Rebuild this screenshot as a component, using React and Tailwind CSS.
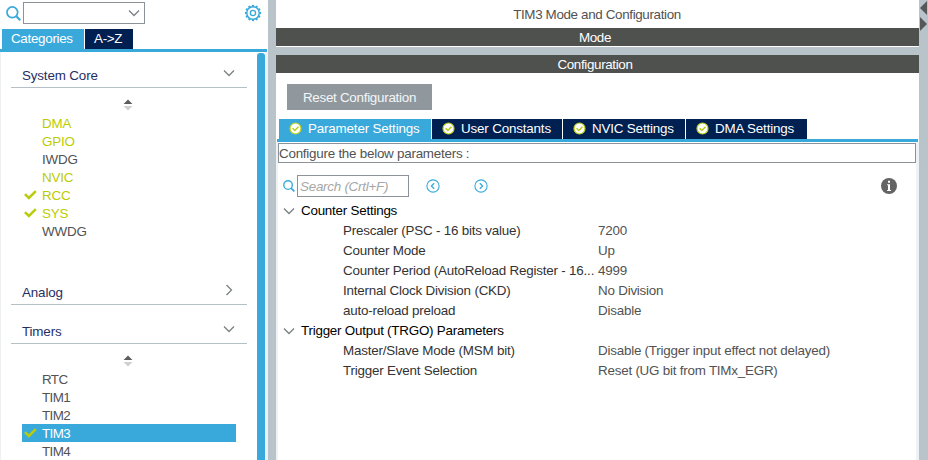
const Magnifier = ({ size }) => (
  <svg width={size} height={size} viewBox="0 0 14 14" fill="none" stroke="#39a9dc" strokeWidth="1.6" className="shrink-0">
    <circle cx="5.9" cy="5.9" r="5" />
    <path d="M9.4 9.4 13.3 13.3" strokeWidth="2" />
  </svg>
);

const Chevron = ({ right }) => (
  <svg width="12" height="12" viewBox="0 0 12 12" fill="none" stroke="#7b8084" strokeWidth="1.3" className="shrink-0">
    <path d={right ? "M3.5 1 8.5 6 3.5 11" : "M1 3.5 6 8.5 11 3.5"} />
  </svg>
);

const teeth = [0, 30, 60, 90, 120, 150, 180, 210, 240, 270, 300, 330];

const Gear = () => (
  <svg width="18" height="18" viewBox="0 0 18 18" fill="none" stroke="#39a9dc" className="shrink-0">
    <circle cx="9" cy="9" r="6.2" strokeWidth="1.4" />
    <circle cx="9" cy="9" r="2.6" strokeWidth="1.4" />
    {teeth.map((a) => (
      <path key={a} d="M9 .9v1.9" strokeWidth="2.2" transform={`rotate(${a} 9 9)`} />
    ))}
  </svg>
);

const Tick = () => (
  <svg width="13" height="10" viewBox="0 0 13 10" fill="none" stroke="#b9cc0c" strokeWidth="2.5">
    <path d="M0.9 4.2 4.9 8 11.8 1.2" />
  </svg>
);

const Badge = () => (
  <svg width="13" height="13" viewBox="0 0 13 13" className="shrink-0">
    <circle cx="6.5" cy="6.5" r="5.5" fill="#fff" stroke="#bccf1a" strokeWidth="1.2" />
    <path d="M3.6 6.3 5.8 8.5 9.5 4.8" fill="none" stroke="#b9cc0c" strokeWidth="1.4" />
  </svg>
);

const Sorter = () => (
  <svg width="10" height="12" viewBox="0 0 10 12">
    <path d="M.6 5 5 .4 9.4 5Z" fill="#5c5c5c" />
    <path d="M.6 7 5 11.6 9.4 7Z" fill="#cfcfcf" />
  </svg>
);

const CircleArrow = ({ right }) => (
  <svg width="14" height="14" viewBox="0 0 14 14" fill="none" stroke="#39a9dc" className="shrink-0">
    <circle cx="7" cy="7" r="6.1" strokeWidth="1.1" />
    <path d={right ? "M5.8 4.2 8.6 7 5.8 9.8" : "M8.2 4.2 5.4 7 8.2 9.8"} strokeWidth="1.3" />
  </svg>
);

const Info = () => (
  <svg width="16" height="16" viewBox="0 0 16 16" className="shrink-0">
    <circle cx="8" cy="8" r="8" fill="#646464" />
    <path d="M7 2.8h2v1.9H7ZM6.1 6.2H9v5.9h1v1H6.1v-1H7V7.2h-.9Z" fill="#fff" />
  </svg>
);

function GroupHeader({ label, closed }) {
  return (
    <div className="ml-[10px] flex h-[24px] w-[236px] items-center justify-between border-b border-[#b4c0c5] pr-[12px] pl-[11px] tracking-[-0.15px] text-[#1f2f66]">
      <span>{label}</span>
      <span className="-mt-[5px] flex">
        <Chevron right={closed} />
      </span>
    </div>
  );
}

const tones = { green: "text-[#bbcc01]", gray: "text-[#525252]", selected: "bg-[#39a9dc] text-white" };

function PeripheralList({ items, spacing }) {
  return (
    <ul className={`ml-[21px] w-[214px] ${spacing}`}>
      {items.map(([name, tone, ticked]) => (
        <li key={name} className={`flex h-[18px] items-center ${tones[tone]}`}>
          <span className="flex w-[20px] pl-[2px]">{ticked && <Tick />}</span>
          <span className="pt-[2px]">{name}</span>
        </li>
      ))}
    </ul>
  );
}

function Sidebar() {
  return (
    <aside className="flex w-[268px] shrink-0 flex-col">
      <div className="flex h-[29px] items-start pt-[2px] pl-[6px]">
        <span className="mt-[4px] flex w-[17px]">
          <Magnifier size={15} />
        </span>
        <div className="flex h-[22px] w-[122px] items-center justify-end border border-[#8c9299] pr-[4px]">
          <Chevron />
        </div>
        <span className="mt-[2px] ml-[99px] flex">
          <Gear />
        </span>
      </div>
      <div className="mr-px flex h-[23px] gap-px border-b-3 border-[#39a9dc] pl-[2px] text-white">
        <div className="flex w-[82px] items-center bg-[#39a9dc] pl-[9px] tracking-[-0.3px]">Categories</div>
        <div className="flex w-[48px] items-center bg-[#002052] pl-[9px] tracking-[-0.3px]">A-&gt;Z</div>
      </div>
      <div className="flex min-h-0 flex-1 border-l border-[#eef0f2]">
        <div className="w-[256px] shrink-0 pt-[12px]">
          <GroupHeader label="System Core" />
          <div className="flex h-[26px] items-center pt-[8px] pl-[122px]">
            <Sorter />
          </div>
          <PeripheralList
            spacing="tracking-[-0.15px]"
            items={[
              ["DMA", "green"],
              ["GPIO", "green"],
              ["IWDG", "gray"],
              ["NVIC", "green"],
              ["RCC", "green", true],
              ["SYS", "green", true],
              ["WWDG", "gray"],
            ]}
          />
          <div className="h-[41px]" />
          <GroupHeader label="Analog" closed />
          <div className="h-[15px]" />
          <GroupHeader label="Timers" />
          <div className="flex h-[26px] items-center pt-[8px] pl-[122px]">
            <Sorter />
          </div>
          <PeripheralList
            spacing="tracking-[-0.6px]"
            items={[
              ["RTC", "gray"],
              ["TIM1", "gray"],
              ["TIM2", "gray"],
              ["TIM3", "selected", true],
              ["TIM4", "gray"],
            ]}
          />
        </div>
        <div className="mt-px w-[8px] rounded-t-[3px] bg-[#39a9dc]" />
        <div className="flex-1 bg-[#eff2f4]" />
      </div>
    </aside>
  );
}

const tabs = [
  ["Parameter Settings", "w-[152px] bg-[#39a9dc]"],
  ["User Constants", "w-[130px] bg-[#002052]"],
  ["NVIC Settings", "w-[122px] bg-[#002052]"],
  ["DMA Settings", "w-[121px] bg-[#002052]"],
];

const groups = [
  {
    title: "Counter Settings",
    rows: [
      ["Prescaler (PSC - 16 bits value)", "7200"],
      ["Counter Mode", "Up"],
      ["Counter Period (AutoReload Register - 16...", "4999"],
      ["Internal Clock Division (CKD)", "No Division"],
      ["auto-reload preload", "Disable"],
    ],
  },
  {
    title: "Trigger Output (TRGO) Parameters",
    rows: [
      ["Master/Slave Mode (MSM bit)", "Disable (Trigger input effect not delayed)"],
      ["Trigger Event Selection", "Reset (UG bit from TIMx_EGR)"],
    ],
  },
];

function ConfigPanel() {
  return (
    <main className="flex w-[643px] shrink-0 flex-col">
      <h1 className="flex h-[28px] items-center justify-center pt-[2px] pr-px tracking-[-0.35px] text-[#525252]">
        TIM3 Mode and Configuration
      </h1>
      <div className="flex h-[18px] items-center justify-center bg-[#4f514f] pt-px pr-[5px] tracking-[-0.4px] text-white">Mode</div>
      <div className="mt-px h-[8px] bg-[#b8c4ca]" />
      <div className="flex h-[18px] items-center justify-center bg-[#4f514f] pt-px pr-[5px] tracking-[-0.35px] text-white">
        Configuration
      </div>
      <button className="mt-[11px] ml-[11px] flex h-[26px] w-[145px] items-center justify-center bg-[#90989e] pt-px tracking-[-0.27px] text-[#f4f6f7]">
        Reset Configuration
      </button>
      <div className="mt-[9px] mr-px ml-px flex h-[23px] gap-px border-b-3 border-[#39a9dc] pl-[2px] tracking-[-0.17px] text-white">
        {tabs.map(([label, style]) => (
          <div key={label} className={`flex items-center gap-[6px] pl-[10px] ${style}`}>
            <span className="-mt-[2px] flex">
              <Badge />
            </span>
            {label}
          </div>
        ))}
      </div>
      <div className="flex-1 border-r-3 border-l-2 border-[#eff2f4] pt-px">
        <div className="flex h-[20px] items-center border border-[#8c9299] pt-[2px] tracking-[-0.24px] text-[#525252]">
          Configure the below parameters :
        </div>
        <div className="flex h-[38px] items-start pt-[12px] pl-[5px]">
          <span className="mt-[5px] flex w-[14px]">
            <Magnifier size={12} />
          </span>
          <div className="flex h-[22px] w-[112px] items-center border border-[#8c9299] pt-px pl-[2px] tracking-[-0.25px] text-[#a6a6a6] italic">
            Search (Crtl+F)
          </div>
          <span className="mt-[4px] ml-[17px] flex gap-[34px]">
            <CircleArrow />
            <CircleArrow right />
          </span>
          <span className="mt-[3px] mr-[19px] ml-auto flex">
            <Info />
          </span>
        </div>
        {groups.map((group) => (
          <section key={group.title}>
            <h2 className="flex h-[20px] items-center gap-[6px] pl-[5px] tracking-[-0.23px] text-black">
              <Chevron />
              {group.title}
            </h2>
            {group.rows.map(([name, value]) => (
              <div key={name} className="flex h-[20px] items-center pl-[65px]">
                <span className="w-[255px] tracking-[-0.2px] text-[#333333]">{name}</span>
                <span className="tracking-[-0.22px] text-[#525252]">{value}</span>
              </div>
            ))}
          </section>
        ))}
      </div>
    </main>
  );
}

export default function App() {
  return (
    <div className="flex h-[460px] w-[928px] overflow-hidden bg-white font-['Liberation_Sans',Arial,sans-serif] text-[13.4px] leading-[16px] tracking-[-0.2px] whitespace-nowrap">
      <Sidebar />
      <div className="w-[8px] shrink-0 bg-[#b8c4ca]" />
      <ConfigPanel />
      <div className="w-[9px] shrink-0 bg-[#b8c4ca]">
        <svg width="9" height="32" viewBox="0 0 9 32" fill="#555759">
          <path d="M1 8 8 1V15Z" />
          <path d="M1 17V31L8 24Z" />
        </svg>
      </div>
    </div>
  );
}
